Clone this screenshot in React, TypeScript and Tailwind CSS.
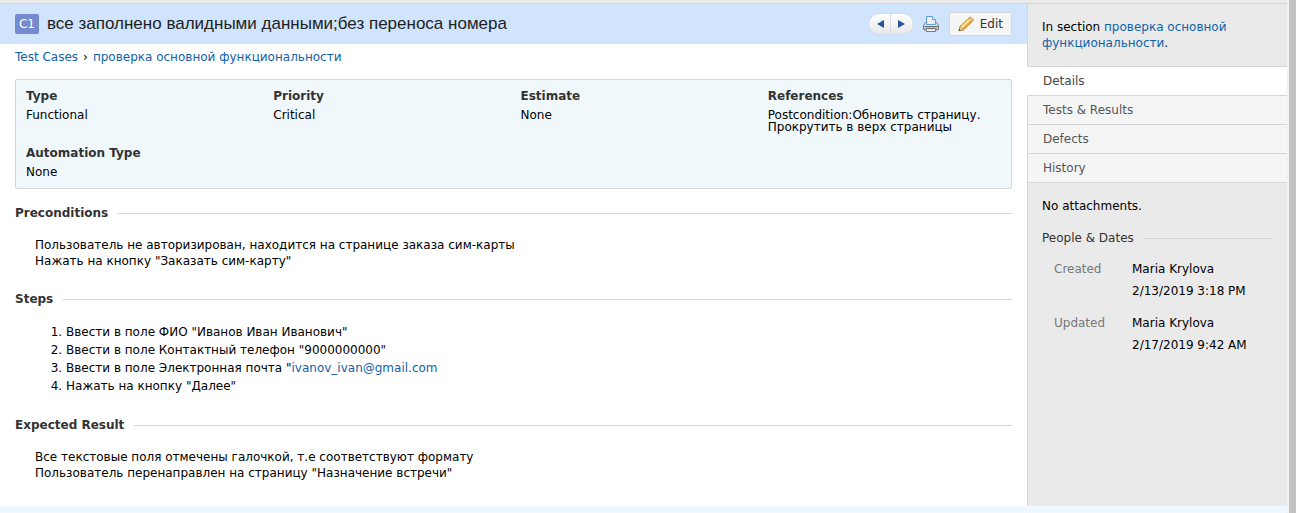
import type { ReactNode } from "react";

const fields = [
  { label: "Type", value: "Functional" },
  { label: "Priority", value: "Critical" },
  { label: "Estimate", value: "None" },
  { label: "References", value: "Postcondition:Обновить страницу.\nПрокрутить в верх страницы" },
  { label: "Automation Type", value: "None" },
];

const tabs = ["Details", "Tests & Results", "Defects", "History"];

const people = [
  { label: "Created", name: "Maria Krylova", date: "2/13/2019 3:18 PM" },
  { label: "Updated", name: "Maria Krylova", date: "2/17/2019 9:42 AM" },
];

function PrinterIcon() {
  return (
    <svg width="16" height="16" viewBox="0 0 16 16" aria-hidden="true">
      <defs>
        <linearGradient id="printer-body" x1="0" y1="0" x2="0" y2="1">
          <stop offset="0" stopColor="#f0f1f3" />
          <stop offset="1" stopColor="#a4a8af" />
        </linearGradient>
      </defs>
      <path d="M1.500 7.500q.3-1 1.300-1h10.400q1 0 1.300 1l1 2.500v3q0 1-1 1h-13q-1 0-1-1v-3z" fill="url(#printer-body)" stroke="#7b7f86" />
      <path d="M3.500 8.500V.5h6l3 3v5z" fill="#d9ebfc" stroke="#5f9fdb" />
      <path d="M9.500.5v3h3" fill="#f5faff" stroke="#5f9fdb" />
      <path d="M5 2.500h3M5 4.500h3M5 6.500h6" stroke="#fff" />
      <path d="M2 9.500h12" stroke="#e9ebed" />
      <path d="M1.500 10.500h13" stroke="#666a71" />
      <path d="M3.500 12.500h9v3h-9z" fill="#f7f8f9" stroke="#767a80" />
      <path d="M5 13.500h6" stroke="#d2d5d9" />
    </svg>
  );
}

function PencilIcon() {
  return (
    <svg width="16" height="16" viewBox="0 0 16 16" aria-hidden="true">
      <path d="M1 14.700l1-4.300L11.200 1.800Q12.400.9 13.600 1.800l1.200 1.300q.8 1.100-.2 2.200L5.500 13.800z" fill="#f5c354" stroke="#c18a35" />
      <path d="M2.800 10.600l8.200-7.600 1.300 1.300-8.100 7.700z" fill="#ffe49a" />
      <path d="M4.700 12.500l8.300-7.700.8.900-8.300 7.500z" fill="#e69b2d" />
      <path d="M11 2.200q1.500-1.200 2.600-.4l1.200 1.300q.8 1.100-.2 2.200l-.6.500z" fill="#f4d3a4" stroke="#c18f58" strokeWidth=".7" />
      <path d="M1 14.700l1-4.300 3.500 3.400z" fill="#f4dfb5" stroke="#a97a35" strokeWidth=".6" />
      <path d="M.6 15l.7-2.300 1.700 1.700z" fill="#57493c" />
    </svg>
  );
}

function Section({ title, children }: { title: string; children: ReactNode }) {
  return (
    <section>
      <div className="flex items-center gap-2.5">
        <h2 className="font-bold text-[#333]">{title}</h2>
        <div className="h-px flex-1 bg-[#d6d6d6]" />
      </div>
      {children}
    </section>
  );
}

export default function App() {
  return (
    <div className="flex min-h-screen bg-white font-['DejaVu_Sans',Verdana,sans-serif] text-xs leading-4 text-black">
      <div className="flex min-w-0 flex-1 flex-col">
        <div className="h-1 border-b border-[#d6d6d6] bg-[#eaeaea]" />
        <div className="flex flex-1">
          <main className="min-w-0 flex-1">
            <header className="flex h-10 items-center bg-[#d0e4fd] px-[15px]">
              <span className="flex h-5 w-6 items-center justify-center rounded-xs bg-[#758bcf] text-white">C1</span>
              <h1 className="ml-2 flex-1 font-['Liberation_Sans',Arial,sans-serif] text-[17px] leading-5 text-[#222]">
                все заполнено валидными данными;без переноса номера
              </h1>
              <div className="flex h-5 w-11 overflow-hidden rounded-full bg-linear-to-b from-white to-[#e8e8e8] shadow-[0_0_1px_#b8bcc4]">
                <button type="button" aria-label="Previous" className="flex flex-1 items-center justify-center border-r border-[#d8dce2]">
                  <svg width="8" height="8" viewBox="0 0 8 8" aria-hidden="true">
                    <path d="M8 0v8L1 4z" fill="#29529b" />
                  </svg>
                </button>
                <button type="button" aria-label="Next" className="flex flex-1 items-center justify-center">
                  <svg width="8" height="8" viewBox="0 0 8 8" aria-hidden="true">
                    <path d="M0 0v8l7-4z" fill="#29529b" />
                  </svg>
                </button>
              </div>
              <button type="button" aria-label="Print" className="mx-2.5">
                <PrinterIcon />
              </button>
              <button type="button" className="flex h-6 items-center gap-1.5 rounded-xs border border-[#d6d6d6] bg-[#f5f5f5] px-2 text-[#333]">
                <PencilIcon />
                Edit
              </button>
            </header>

            <div className="px-[15px] pt-[5px] pb-6">
              <nav aria-label="Breadcrumb" className="mb-3.5 flex gap-[5px]">
                <a href="#cases" className="text-[#0f63a9]">Test Cases</a>
                <span>›</span>
                <a href="#section" className="text-[#0f63a9]">проверка основной функциональности</a>
              </nav>

              <dl className="mb-4 grid grid-cols-4 gap-y-3 rounded-xs border border-[#d6d6d6] bg-[#f0f8fc] pt-2 pr-1.5 pb-2.5">
                {fields.map((field) => (
                  <div key={field.label} className="pl-2.5">
                    <dt className="mb-[5px] font-bold text-[#333]">{field.label}</dt>
                    <dd className="leading-3 whitespace-pre-line">{field.value}</dd>
                  </div>
                ))}
              </dl>

              <div className="flex flex-col gap-[22px]">
                <Section title="Preconditions">
                  <p className="mt-4 pl-5">
                    Пользователь не авторизирован, находится на странице заказа сим-карты
                    <br />
                    Нажать на кнопку "Заказать сим-карту"
                  </p>
                </Section>
                <Section title="Steps">
                  <ol className="mt-4 list-decimal pl-[51px] leading-[18px]">
                    <li>Ввести в поле ФИО "Иванов Иван Иванович"</li>
                    <li>Ввести в поле Контактный телефон "9000000000"</li>
                    <li>
                      Ввести в поле Электронная почта "
                      <a href="mailto:ivanov_ivan@gmail.com" className="text-[#0f63a9]">ivanov_ivan@gmail.com</a>
                    </li>
                    <li>Нажать на кнопку "Далее"</li>
                  </ol>
                </Section>
                <Section title="Expected Result">
                  <p className="mt-4 pl-5">
                    Все текстовые поля отмечены галочкой, т.е соответствуют формату
                    <br />
                    Пользователь перенаправлен на страницу "Назначение встречи"
                  </p>
                </Section>
              </div>
            </div>
          </main>

          <aside className="flex w-[260px] shrink-0 flex-col bg-[#eaeaea]">
            <p className="border-b border-l border-[#d6d6d6] px-3.5 py-[15px]">
              In section <a href="#section" className="text-[#0f63a9]">проверка основной функциональности</a>.
            </p>
            <nav aria-label="Test case views">
              {tabs.map((tab, i) => (
                <a
                  key={tab}
                  href={"#" + tab}
                  className={
                    i === 0
                      ? "block border-b border-b-[#d6d6d6] border-l border-l-white bg-white px-[15px] py-1.5 text-[#444]"
                      : "block border-b border-l border-[#d6d6d6] bg-[#f5f5f5] px-[15px] py-1.5 text-[#555]"
                  }
                >
                  {tab}
                </a>
              ))}
            </nav>
            <div className="flex-1 border-l border-[#d6d6d6] pt-[15px] pr-[15px] pl-3.5">
              <p>No attachments.</p>
              <div className="mt-4 flex items-center gap-2.5">
                <h2 className="text-[#333]">People &amp; Dates</h2>
                <div className="h-px flex-1 bg-[#d6d6d6]" />
              </div>
              <dl className="mt-3 flex flex-col gap-2.5 pl-3 leading-[22px]">
                {people.map((person) => (
                  <div key={person.label} className="flex">
                    <dt className="w-[78px] text-[#777]">{person.label}</dt>
                    <dd>
                      {person.name}
                      <br />
                      {person.date}
                    </dd>
                  </div>
                ))}
              </dl>
            </div>
          </aside>
        </div>
        <footer className="h-[7px] bg-[#f0f8ff]" />
      </div>
      <div className="w-[9px] shrink-0 border-l-2 border-[#f1f1f1] bg-[#c1c1c1]" />
    </div>
  );
}
